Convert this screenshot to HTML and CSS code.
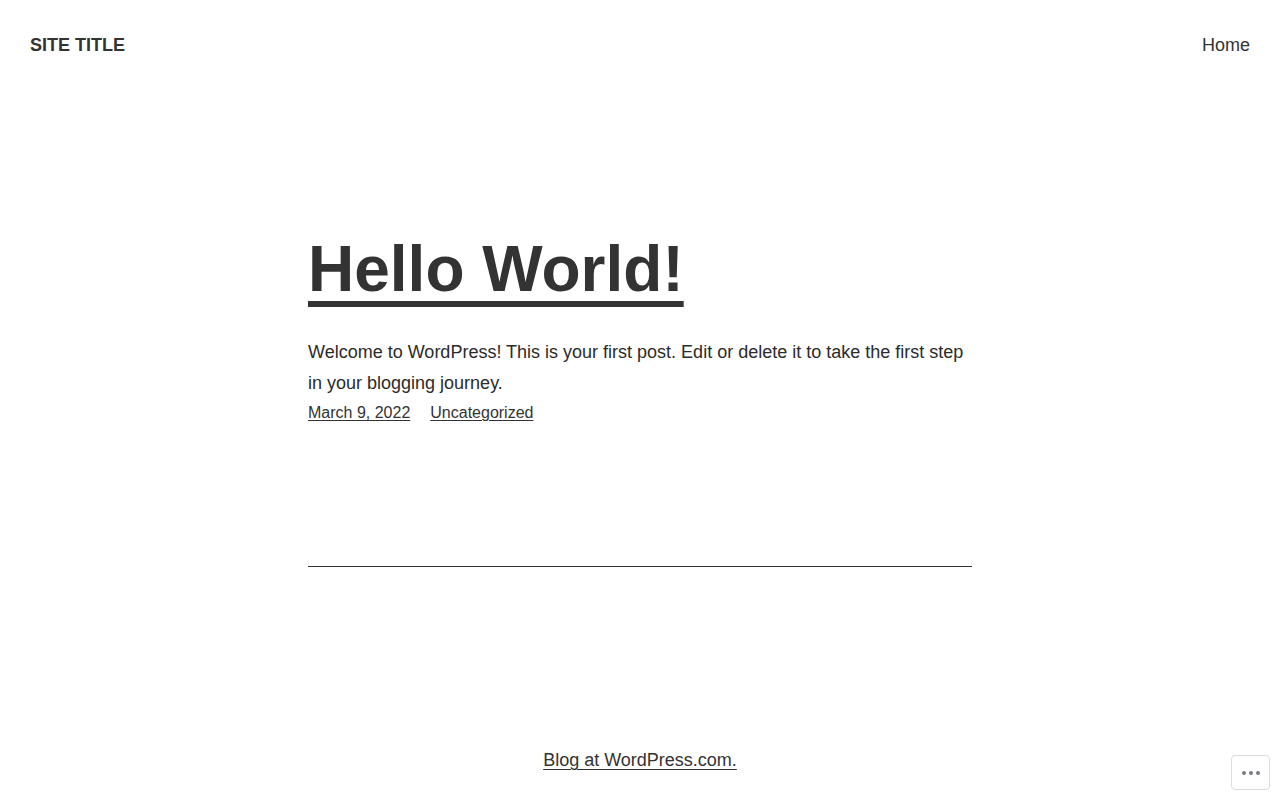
FILE: index.html
```html
<!DOCTYPE html>
<html lang="en">
<head>
    <meta charset="UTF-8">
    <meta name="viewport" content="width=device-width, initial-scale=1.0">
    <title>Site Title</title>
    <link rel="stylesheet" href="styles.css">
</head>
<body>
    <header class="site-header">
        <a class="site-title" href="#">Site Title</a>
        <nav class="site-nav">
            <a href="#">Home</a>
        </nav>
    </header>
    <main class="site-main">
        <article class="post">
            <h1 class="post-title"><a href="#">Hello World!</a></h1>
            <p class="post-text">Welcome to WordPress! This is your first post. Edit or delete it to take the first step in your blogging journey.</p>
            <div class="post-meta">
                <a href="#">March 9, 2022</a>
                <a href="#">Uncategorized</a>
            </div>
        </article>
        <hr class="post-divider">
    </main>
    <footer class="site-footer">
        <a href="#">Blog at WordPress.com.</a>
    </footer>
    <button class="actions-button" aria-label="More actions">
        <svg width="18" height="4" viewBox="0 0 18 4">
            <circle cx="2" cy="2" r="2"></circle>
            <circle cx="9" cy="2" r="2"></circle>
            <circle cx="16" cy="2" r="2"></circle>
        </svg>
    </button>
</body>
</html>
```

FILE: styles.css
```css
body {
    display: flex;
    flex-direction: column;
    min-height: 100vh;
    margin: 0;
    box-sizing: border-box;
    background: #fff;
    color: #333;
    font-family: 'Liberation Sans', Arial, sans-serif;
}
a {
    color: inherit;
}
.site-header {
    display: flex;
    justify-content: space-between;
    align-items: center;
    padding: 30px;
    height: 90px;
    box-sizing: border-box;
}
.site-title {
    font-size: 18px;
    font-weight: bold;
    text-transform: uppercase;
    text-decoration: none;
}
.site-nav a {
    font-size: 18px;
    text-decoration: none;
}
.site-main {
    flex: 1;
    width: 664px;
    margin: 0 auto;
    padding-top: 141px;
}
.post-title {
    margin: 0;
    font-size: 64px;
    line-height: 77px;
    font-weight: bold;
}
.post-title a {
    text-decoration-thickness: 6px;
    text-underline-offset: 10px;
}
.post-text {
    margin: 29px 0 0;
    font-size: 18px;
    line-height: 31px;
    color: #2b2b2b;
}
.post-meta {
    display: flex;
    gap: 20px;
    margin-top: 2px;
    font-size: 16px;
    line-height: 24px;
}
.post-meta a {
    text-underline-offset: 2px;
    text-decoration-thickness: 1px;
}
.post-divider {
    margin: 141px 0 0;
    border: none;
    border-top: 1px solid #333;
}
.site-footer {
    padding-bottom: 29px;
    text-align: center;
    font-size: 18px;
}
.site-footer a {
    text-underline-offset: 3px;
    text-decoration-thickness: 1px;
}
.actions-button {
    position: fixed;
    right: 10px;
    bottom: 10px;
    display: flex;
    align-items: center;
    justify-content: center;
    width: 39px;
    height: 35px;
    padding: 0;
    background: #fff;
    border: 1px solid #dcdcde;
    border-radius: 4px;
}
.actions-button svg {
    fill: #787c82;
}
```
